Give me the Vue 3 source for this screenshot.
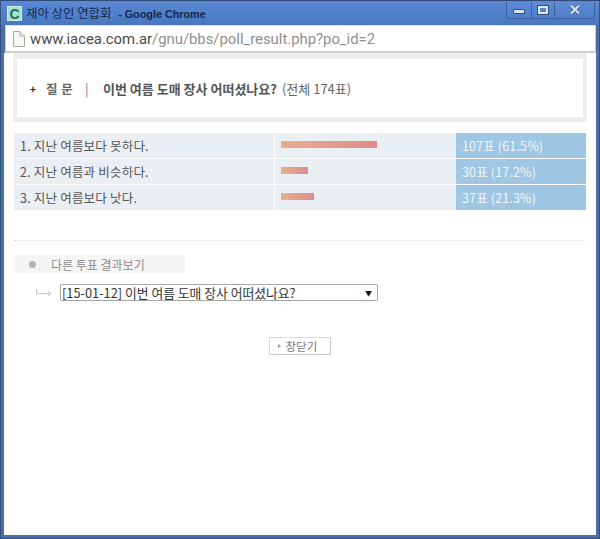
<template>
  <div class="window">
    <header class="titlebar">
      <span class="app-icon">C</span>
      <span class="title">재아 상인 연합회 <b>- Google Chrome</b></span>
      <div class="controls">
        <button class="ctl ctl-min"><i></i></button>
        <button class="ctl ctl-max"><i></i></button>
        <button class="ctl ctl-close">
          <svg width="12" height="11" viewBox="0 0 12 11">
            <path d="M2 1.500l8 8M10 1.500l-8 8" stroke="#3f5e94" stroke-width="3.600" fill="none" />
            <path d="M2 1.500l8 8M10 1.500l-8 8" stroke="#d9e0ec" stroke-width="2.200" fill="none" />
          </svg>
        </button>
      </div>
    </header>

    <div class="addressbar">
      <svg class="page-icon" width="13" height="16" viewBox="0 0 13 16">
        <path d="M1.500 .5h6.500l4.500 4.500v10.500h-11z" fill="#f6f6f4" stroke="#a9a9a4" />
        <path d="M8 .5v4.500h4.500" fill="#e4e4e0" stroke="#a9a9a4" />
      </svg>
      <span class="url"><span class="host">www.iacea.com.ar</span>/gnu/bbs/poll_result.php?po_id=2</span>
    </div>

    <main class="content">
      <section class="question">
        <span class="plus">+</span>
        <span class="q-label">질 문</span>
        <span class="q-sep">|</span>
        <strong class="q-text">이번 여름 도매 장사 어떠셨나요?</strong>
        <span class="q-total">(전체 174표)</span>
      </section>

      <div class="results">
        <div v-for="row in rows" :key="row.label" class="row">
          <div class="cell cell-label">{{ row.label }}</div>
          <div class="cell cell-bar">
            <div class="bar" :style="{ width: row.width + 'px' }"></div>
          </div>
          <div class="cell cell-count">{{ row.count }}</div>
        </div>
      </div>

      <div class="divider"></div>

      <div class="other-title">
        <span class="dot"></span>
        <span>다른 투표 결과보기</span>
      </div>

      <div class="picker">
        <svg class="arrow" width="16" height="8" viewBox="0 0 16 8">
          <path d="M.5 0v4.500h14M12 2l3 2.500-3 2.500" stroke="#c4c4c4" fill="none" />
        </svg>
        <div class="select">
          <span>[15-01-12] 이번 여름 도매 장사 어떠셨나요?</span>
          <span class="caret">▼</span>
        </div>
      </div>

      <div class="actions">
        <button class="close-btn"><span class="tri"></span>창닫기</button>
      </div>
    </main>
  </div>
</template>

<script setup>
const rows = [
  { label: '1. 지난 여름보다 못하다.', width: 96, count: '107표 (61.5%)' },
  { label: '2. 지난 여름과 비슷하다.', width: 27, count: '30표 (17.2%)' },
  { label: '3. 지난 여름보다 낫다.', width: 33, count: '37표 (21.3%)' }
]
</script>

<style>
html, body { margin: 0; background: #fff; }
</style>

<style scoped>
.window {
  box-sizing: border-box;
  width: 600px;
  height: 539px;
  display: flex;
  flex-direction: column;
  background: #4a6ea8;
  border: 1px solid #34507f;
  border-top-color: #2f4a78;
  padding: 0 3px 3px 3px;
  font-family: "Noto Sans CJK KR", "Liberation Sans", sans-serif;
  overflow: hidden;
}
.titlebar {
  height: 24px;
  margin: 0 -3px;
  padding: 0 4px 0 6px;
  display: flex;
  align-items: center;
  flex-shrink: 0;
  background: linear-gradient(#5b88d3, #4f7fca 60%, #4a76bc);
}
.app-icon {
  width: 15px;
  height: 15px;
  margin-right: 4px;
  background: #a9e0d2;
  color: #1c6f5c;
  font: bold 14px/14px "Liberation Sans", sans-serif;
  text-align: center;
  border: 1px solid #cfeee6;
  box-sizing: border-box;
}
.title {
  font-size: 12.400px;
  color: #14284e;
}
.title b {
  margin-left: 4px;
  font-family: "Liberation Sans", sans-serif;
  font-size: 10.800px;
  font-weight: bold;
  color: #14284e;
}
.controls {
  margin-left: auto;
  margin-top: -6px;
  margin-right: 0;
  height: 16px;
  display: flex;
  border: 1px solid #3d5f97;
  border-top: 0;
  border-radius: 0 0 4px 4px;
  background: linear-gradient(#5d8bd6, #4f7ec9);
}
.ctl {
  padding: 0;
  border: 0;
  background: none;
  display: flex;
  align-items: center;
  justify-content: center;
  border-right: 1px solid #3d5f97;
}
.ctl:last-child { border-right: 0; }
.ctl-min { width: 25px; }
.ctl-max { width: 23px; }
.ctl-close { width: 39px; }
.ctl-min i {
  width: 10px;
  height: 3px;
  margin-top: 4px;
  background: #d8e2f2;
  border: 1px solid #334f80;
  border-radius: 1px;
}
.ctl-max i {
  width: 6px;
  height: 4px;
  border: 2px solid #dfe7f4;
  outline: 1px solid #334f80;
}
.addressbar {
  height: 28px;
  margin: 0 0 0 1px;
  padding-left: 6px;
  display: flex;
  align-items: center;
  flex-shrink: 0;
  box-sizing: border-box;
  background: #fff;
  border: 1px solid #c9c9c9;
  border-bottom: 2px solid #cdcdcd;
  border-top-color: #dbe2ea;
}
.page-icon { margin-right: 5px; }
.url {
  font-family: Roboto, sans-serif;
  font-size: 14.850px;
  color: #8f8f8f;
}
.host { color: #4a4a4a; }
.content {
  flex: 1;
  padding: 0 9px;
  background: #fff;
}
.question {
  box-sizing: border-box;
  height: 69px;
  margin: 0 0 11px 0;
  padding: 0 0 0 13px;
  display: flex;
  align-items: center;
  border: 4px solid #eeeeee;
  border-width: 6px 4px 5px;
  font-size: 13px;
  color: #555;
}
.plus { width: 16px; color: #222; font-weight: bold; font-size: 10px; }
.q-label { width: 39px; font-weight: bold; color: #666; font-size: 12.500px; word-spacing: 1px; }
.q-sep { width: 18px; color: #777; }
.q-text { margin-right: 5px; font-size: 13px; font-weight: bold; color: #555; }
.q-total { font-size: 13px; color: #666; }
.results {
  display: flex;
  flex-direction: column;
  gap: 1px;
  margin: 0 1px;
}
.row {
  display: grid;
  grid-template-columns: 260px 181px 129px;
  column-gap: 1px;
  height: 25px;
  background: #fff;
}
.cell {
  display: flex;
  align-items: center;
  font-size: 12.500px;
  background: #eaeff4;
}
.cell-label { padding-left: 6px; color: #555; letter-spacing: .2px; }
.cell-bar { padding-left: 6px; padding-bottom: 2px; box-sizing: border-box; }
.bar {
  height: 7px;
  background: linear-gradient(90deg, #e8b08c, #df8a8c);
}
.cell-count {
  padding-left: 6px;
  margin-left: -1px;
  background: #9fc6e2;
  color: #f1f6fa;
  font-size: 12.500px;
  letter-spacing: .15px;
}
.divider {
  height: 0;
  margin: 30px 1px 14px;
  border-top: 1px dotted #d8d8d8;
}
.other-title {
  box-sizing: border-box;
  width: 172px;
  height: 18px;
  padding-left: 16px;
  display: flex;
  align-items: center;
  gap: 15px;
  background: #f5f5f5;
  border-radius: 3px;
  font-size: 12px;
  color: #8b8b8b;
}
.dot {
  width: 7px;
  height: 7px;
  border-radius: 50%;
  background: #b4b4ac;
}
.picker {
  display: flex;
  align-items: center;
  margin: 11px 0 0 23px;
}
.arrow { margin-right: 8px; }
.select {
  box-sizing: border-box;
  width: 318px;
  height: 17px;
  padding: 0 5px 0 1px;
  display: flex;
  align-items: center;
  justify-content: space-between;
  background: #fff;
  border: 1px solid #a6a6a6;
  border-radius: 1px;
  font-size: 12.800px;
  color: #333;
}
.caret { font-size: 7px; color: #111; }
.actions {
  display: flex;
  justify-content: center;
  margin-top: 36px;
}
.close-btn {
  box-sizing: border-box;
  width: 62px;
  height: 18px;
  margin-left: -1px;
  padding: 0 0 0 8px;
  display: flex;
  align-items: center;
  gap: 5px;
  background: #fff;
  border: 1px solid #d9d9d9;
  border-right-color: #c8c8c8;
  border-bottom-color: #c8c8c8;
  border-radius: 1px;
  font-family: inherit;
  font-size: 11.500px;
  color: #777;
}
.tri {
  width: 0;
  height: 0;
  border-left: 3px solid #999;
  border-top: 2.500px solid transparent;
  border-bottom: 2.500px solid transparent;
}
</style>
